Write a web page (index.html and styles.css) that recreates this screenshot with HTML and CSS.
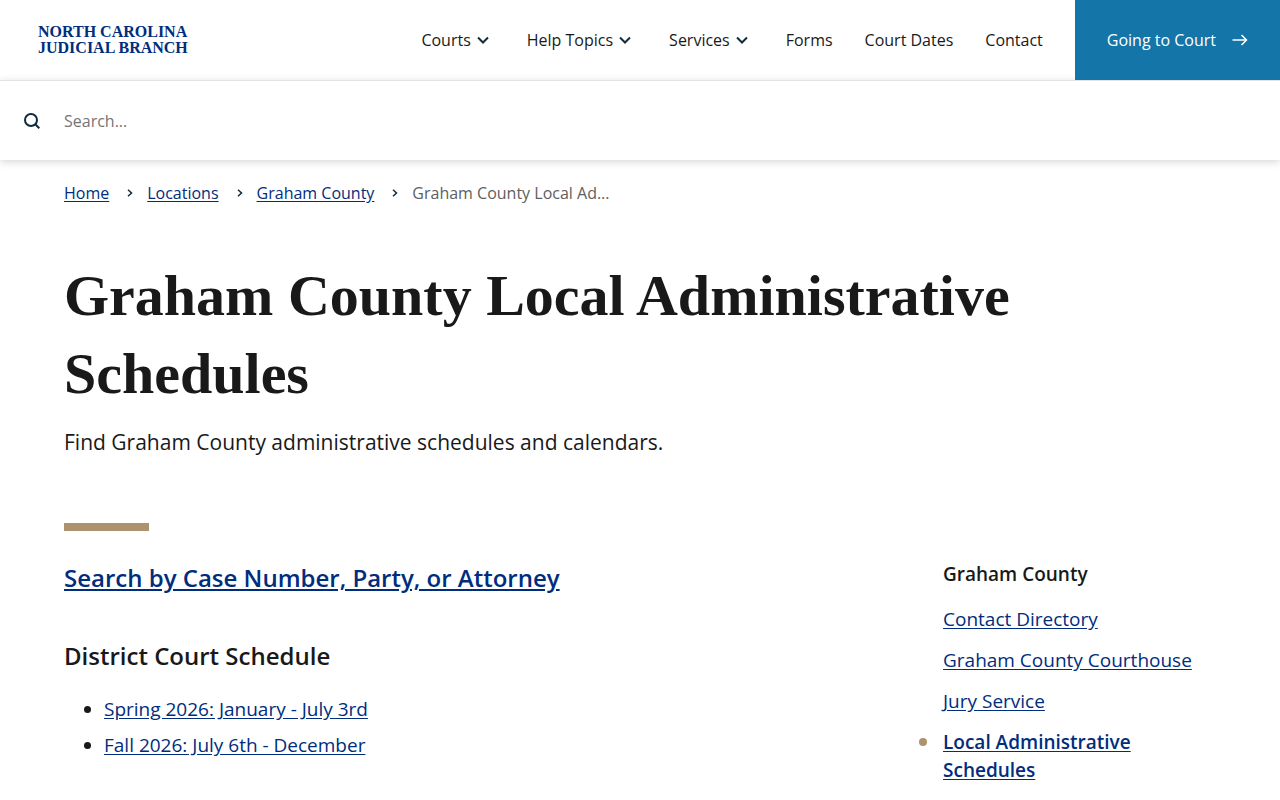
FILE: index.html
```html
<!DOCTYPE html>
<html lang="en">
<head>
  <meta charset="UTF-8">
  <meta name="viewport" content="width=device-width, initial-scale=1.0">
  <title>Graham County Local Administrative Schedules</title>
  <link rel="stylesheet" href="styles.css">
</head>
<body>
  <header class="header">
    <a class="logo" href="#">NORTH CAROLINA<br>JUDICIAL BRANCH</a>
    <nav class="main-nav">
      <button type="button">Courts
        <svg width="24" height="24" viewBox="0 0 24 24"><path d="M7 9.5l5 5 5-5"/></svg>
      </button>
      <button type="button">Help Topics
        <svg width="24" height="24" viewBox="0 0 24 24"><path d="M7 9.5l5 5 5-5"/></svg>
      </button>
      <button type="button">Services
        <svg width="24" height="24" viewBox="0 0 24 24"><path d="M7 9.5l5 5 5-5"/></svg>
      </button>
      <a href="#">Forms</a>
      <a href="#">Court Dates</a>
      <a href="#">Contact</a>
    </nav>
    <a class="cta" href="#">Going to Court
      <svg width="16" height="16" viewBox="0 0 16 16"><path d="M.5 8h14M9.500 3l5 5-5 5"/></svg>
    </a>
  </header>

  <form class="search">
    <button type="submit" aria-label="Search">
      <svg width="16" height="16" viewBox="0 0 16 16"><circle cx="7" cy="7" r="6"/><path d="M11.300 11.300l4 4"/></svg>
    </button>
    <input type="search" placeholder="Search..." aria-label="Search">
  </form>

  <main class="page">
    <nav class="breadcrumb" aria-label="Breadcrumb">
      <a href="#">Home</a>
      <svg width="6" height="8" viewBox="0 0 6 8"><path d="M1 .8L4.500 4 1 7.200"/></svg>
      <a href="#">Locations</a>
      <svg width="6" height="8" viewBox="0 0 6 8"><path d="M1 .8L4.500 4 1 7.200"/></svg>
      <a href="#">Graham County</a>
      <svg width="6" height="8" viewBox="0 0 6 8"><path d="M1 .8L4.500 4 1 7.200"/></svg>
      <span>Graham County Local Ad...</span>
    </nav>

    <h1>Graham County Local Administrative Schedules</h1>
    <p class="intro">Find Graham County administrative schedules and calendars.</p>

    <div class="columns">
      <div class="content">
        <h2><a href="#">Search by Case Number, Party, or Attorney</a></h2>
        <h2>District Court Schedule</h2>
        <ul>
          <li><a href="#">Spring 2026: January - July 3rd</a></li>
          <li><a href="#">Fall 2026: July 6th - December</a></li>
        </ul>
      </div>
      <aside class="sidebar">
        <h3>Graham County</h3>
        <ul>
          <li><a href="#">Contact Directory</a></li>
          <li><a href="#">Graham County Courthouse</a></li>
          <li><a href="#">Jury Service</a></li>
          <li class="active"><a href="#">Local Administrative Schedules</a></li>
        </ul>
      </aside>
    </div>
  </main>
</body>
</html>
```
FILE: styles.css
```css
* {
  box-sizing: border-box;
}
body {
  margin: 0;
  font-family: "Open Sans", sans-serif;
  font-size: 16px;
  color: #191919;
  background: #fff;
}
a {
  color: #002d7d;
  text-underline-offset: 2px;
}
button {
  font: inherit;
  color: inherit;
  background: none;
  border: none;
  padding: 0;
  cursor: pointer;
}
svg {
  fill: none;
  stroke: #0f2b3c;
  stroke-width: 2;
  flex: none;
}

/* header */
.header {
  display: flex;
  align-items: center;
  height: 80px;
}
.logo {
  margin-left: 38px;
  font-family: "Liberation Serif", serif;
  font-size: 16px;
  line-height: 16px;
  font-weight: bold;
  text-decoration: none;
}
.main-nav {
  display: flex;
  align-items: center;
  gap: 32px;
  margin-left: auto;
  padding-right: 32px;
}
.main-nav a {
  color: inherit;
  text-decoration: none;
}
.main-nav button {
  display: flex;
  align-items: center;
}
.cta {
  position: relative;
  z-index: 1;
  display: flex;
  align-items: center;
  align-self: stretch;
  gap: 16px;
  padding: 0 32px;
  background: #1475a9;
  color: #fff;
  font-weight: 500;
  text-decoration: none;
}
.cta svg {
  stroke: #fff;
  stroke-width: 1.5;
}

/* search */
.search {
  display: flex;
  align-items: center;
  gap: 24px;
  height: 80px;
  padding: 0 24px;
  border-top: 1px solid #e2e2e2;
  box-shadow: 0 2px 8px rgba(0, 0, 0, 0.16);
}
.search button {
  display: flex;
}
.search input {
  flex: 1;
  padding: 0;
  border: none;
  outline: none;
  font: inherit;
}
.search input::placeholder {
  color: #757575;
}

/* page */
.page {
  padding: 20px 64px;
}
.breadcrumb {
  display: flex;
  align-items: center;
  line-height: 26px;
  color: #5e5e5e;
}
.breadcrumb svg {
  margin: 0 14px 0 18px;
  stroke-width: 1.5;
}
h1 {
  margin: 51px 0 0;
  font-family: "Liberation Serif", serif;
  font-size: 58px;
  line-height: 78px;
  font-weight: bold;
}
.intro {
  margin: 12px 0 64px;
  font-size: 21px;
  line-height: 34px;
}
.columns {
  display: grid;
  grid-template-columns: 1fr 273px;
  gap: 64px;
}
.content::before {
  content: "";
  display: block;
  width: 85px;
  height: 8px;
  margin-bottom: 29px;
  background: #ae926d;
}
h2 {
  margin: 0 0 42px;
  font-size: 24px;
  line-height: 36px;
  font-weight: 600;
}
.content ul {
  margin: -25px 0 0;
  padding-left: 40px;
  font-size: 19px;
  line-height: 36px;
}
.sidebar {
  padding-top: 37px;
  font-size: 19px;
  line-height: 28px;
}
.sidebar h3 {
  margin: 0 0 17px;
  font-size: 19px;
  font-weight: 600;
}
.sidebar ul {
  margin: 0;
  padding: 0;
  list-style: none;
}
.sidebar li {
  margin-bottom: 13px;
}
.active {
  position: relative;
  font-weight: 600;
}
.active::before {
  content: "";
  position: absolute;
  top: 10px;
  left: -24px;
  width: 8px;
  height: 8px;
  border-radius: 50%;
  background: #ae926d;
}
```
